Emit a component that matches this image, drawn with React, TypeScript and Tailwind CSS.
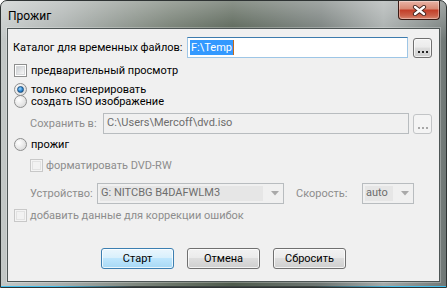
import type { ReactNode } from 'react';

const FONT = "font-['Roboto','Liberation_Sans',sans-serif]";

function Check({ disabled }: { disabled?: boolean }) {
  return (
    <span
      className={`flex h-[13px] w-[13px] shrink-0 items-center justify-center border ${
        disabled ? 'border-[#c8c8c8] bg-[#f4f4f4]' : 'border-[#8e8f8f] bg-white'
      }`}
    >
      <span
        className={`h-[9px] w-[9px] border ${
          disabled
            ? 'border-[#e2e2e2] bg-[#f2f2f2]'
            : 'border-[#d6d8da] bg-[linear-gradient(135deg,#cdd0d4,#f7f7f7)]'
        }`}
      />
    </span>
  );
}

function Radio({ checked }: { checked?: boolean }) {
  return (
    <span className="flex h-[13px] w-[13px] shrink-0 items-center justify-center rounded-full border border-[#8e8f8f] bg-[radial-gradient(circle_at_35%_35%,#ffffff,#d2d2d2)]">
      {checked && (
        <span className="h-[7px] w-[7px] rounded-full border border-[#1d4f7c] bg-[radial-gradient(circle_at_40%_35%,#9ad8ff,#2a84d2_55%,#0d4f8b)]" />
      )}
    </span>
  );
}

function Dots({ disabled }: { disabled?: boolean }) {
  return (
    <button
      className={`flex h-[20px] w-[19px] shrink-0 items-end justify-center rounded-[3px] border pb-[4px] ${
        disabled
          ? 'border-[#c2c4c6] bg-[#f4f4f4]'
          : 'border-[#707070] bg-[linear-gradient(#f2f2f2_0%,#ebebeb_45%,#dddddd_50%,#cfcfcf_100%)] shadow-[inset_0_0_0_1px_rgba(255,255,255,0.7)]'
      }`}
    >
      <span className="flex gap-[2px]">
        {[0, 1, 2].map((i) => (
          <span key={i} className={`h-[2px] w-[2px] ${disabled ? 'bg-[#a8a8a8]' : 'bg-[#222]'}`} />
        ))}
      </span>
    </button>
  );
}

function Btn({ children, primary }: { children: ReactNode; primary?: boolean }) {
  return (
    <button
      className={`h-[21px] w-[73px] whitespace-nowrap rounded-[3px] border text-[11px] leading-none text-black shadow-[inset_0_0_0_1px_rgba(255,255,255,0.75)] ${
        primary
          ? 'border-[#3c7fb1] bg-[linear-gradient(#eaf6fd_0%,#d9f0fc_45%,#bee6fd_50%,#a7d9f5_100%)]'
          : 'border-[#707070] bg-[linear-gradient(#f2f2f2_0%,#ebebeb_45%,#dddddd_50%,#cfcfcf_100%)]'
      }`}
    >
      {children}
    </button>
  );
}

function Arrow() {
  return (
    <svg width="8" height="5" viewBox="0 0 8 5" className="shrink-0">
      <path d="M0 0 H8 L4 4.5 Z" fill="#a9a9a9" />
    </svg>
  );
}

export default function App() {
  return (
    <div
      className={`${FONT} relative h-[288px] w-[447px] overflow-hidden whitespace-nowrap rounded-t-[7px] border border-[#2e3333] bg-[linear-gradient(90deg,#c3c8c7_0%,#a7adab_14%,#6b7569_38%,#4e5a4c_52%,#6f7774_72%,#a4aaa9_86%,#6f7775_100%)] text-[11px] text-black`}
    >
      <div className="absolute inset-x-0 top-0 h-[40px] bg-[linear-gradient(rgba(255,255,255,0.35),rgba(255,255,255,0))]" />
      <div className="absolute bottom-0 inset-x-0 h-[1px] bg-[linear-gradient(90deg,#42c0ee_0%,#42c0ee_12%,#3d4543_30%,#3d4543_70%,#42c0ee_88%,#42c0ee_100%)]" />

      {/* title bar */}
      <div className="relative flex h-[27px] items-start justify-between">
        <span className="pl-[7px] pt-[8px] text-[12px] leading-[14px] text-black">Прожиг</span>
        <div className="mr-[6px] flex h-[19px] w-[42px] items-center justify-center rounded-b-[4px] border border-t-0 border-[#3a1a14] bg-[linear-gradient(#e9b4a6_0%,#d98a75_42%,#c3402a_52%,#cb5f48_80%,#d8866f_100%)] shadow-[inset_0_0_0_1px_rgba(255,255,255,0.35)]">
          <svg width="15" height="11" viewBox="0 0 15 11">
            <path d="M3 2 L12 9 M12 2 L3 9" stroke="#4a2a24" strokeWidth="4.2" strokeLinecap="round" />
            <path d="M3 2 L12 9 M12 2 L3 9" stroke="#ffffff" strokeWidth="2.3" strokeLinecap="round" />
          </svg>
        </div>
      </div>

      {/* client area */}
      <div className="relative mx-[6px] flex h-[254px] flex-col border border-[#4d5555] bg-[#f0f0f0] pl-[5px] shadow-[0_0_0_1px_rgba(255,255,255,0.25)]">
        <div className="mt-[8px] flex h-[21px] items-center">
          <span className="w-[174px] shrink-0 leading-[15px]">Каталог для временных файлов:</span>
          <div className="flex h-[21px] w-[221px] items-center border border-[#9ec6e6] border-t-[#3d7bad] bg-white pl-[2px]">
            <span className="bg-[#3399ff] px-[1px] leading-[15px] text-white">F:\Temp</span>
            <span className="h-[15px] w-[1px] bg-[#c46a1a]" />
          </div>
          <span className="ml-[5px]">
            <Dots />
          </span>
        </div>

        <div className="mt-[6px] flex h-[13px] items-center gap-[4px] pl-[1px]">
          <Check />
          <span className="leading-[13px]">предварительный просмотр</span>
        </div>

        <div className="mt-[6px] flex h-[12px] items-center gap-[4px] pl-[1px]">
          <Radio checked />
          <span className="leading-[13px]">только сгенерировать</span>
        </div>
        <div className="flex h-[12px] items-center gap-[4px] pl-[1px]">
          <Radio />
          <span className="leading-[13px]">создать ISO изображение</span>
        </div>

        <div className="mt-[6px] flex h-[21px] items-center pl-[17px]">
          <span className="w-[73px] shrink-0 leading-[15px] text-[#8d8d8d]">Сохранить в:</span>
          <div className="flex h-[21px] w-[306px] items-center border border-[#b8bcbf] pl-[3px] text-[#6d6d6d]">
            C:\Users\Mercoff\dvd.iso
          </div>
          <span className="ml-[4px]">
            <Dots disabled />
          </span>
        </div>

        <div className="mt-[4px] flex h-[12px] items-center gap-[4px] pl-[1px]">
          <Radio />
          <span className="leading-[13px]">прожиг</span>
        </div>

        <div className="mt-[9px] flex h-[13px] items-center gap-[3px] pl-[17px]">
          <Check disabled />
          <span className="leading-[13px] text-[#8d8d8d]">форматировать DVD-RW</span>
        </div>

        <div className="mt-[11px] flex h-[21px] items-center pl-[17px]">
          <span className="w-[67px] shrink-0 leading-[15px] text-[#8d8d8d]">Устройство:</span>
          <div className="flex h-[21px] w-[187px] items-center border border-[#b8bcbf] p-[2px] pr-[4px]">
            <span className="flex h-full flex-1 items-center bg-[#e6e6e6] pl-[1px] text-[#6d6d6d]">G: NITCBG B4DAFWLM3</span>
            <span className="ml-[8px]">
              <Arrow />
            </span>
          </div>
          <span className="ml-[12px] w-[66px] shrink-0 leading-[15px] text-[#8d8d8d]">Скорость:</span>
          <div className="flex h-[21px] w-[52px] items-center border border-[#b8bcbf] p-[2px] pr-[4px]">
            <span className="flex h-full flex-1 items-center bg-[#e6e6e6] pl-[1px] text-[#6d6d6d]">auto</span>
            <span className="ml-[8px]">
              <Arrow />
            </span>
          </div>
        </div>

        <div className="mt-[5px] flex h-[13px] items-center gap-[3px] pl-[1px]">
          <Check disabled />
          <span className="leading-[13px] text-[#8d8d8d]">добавить данные для коррекции ошибок</span>
        </div>

        <div className="mt-[26px] flex justify-center gap-[13px] pr-[5px]">
          <Btn primary>Старт</Btn>
          <Btn>Отмена</Btn>
          <Btn>Сбросить</Btn>
        </div>
      </div>
    </div>
  );
}
